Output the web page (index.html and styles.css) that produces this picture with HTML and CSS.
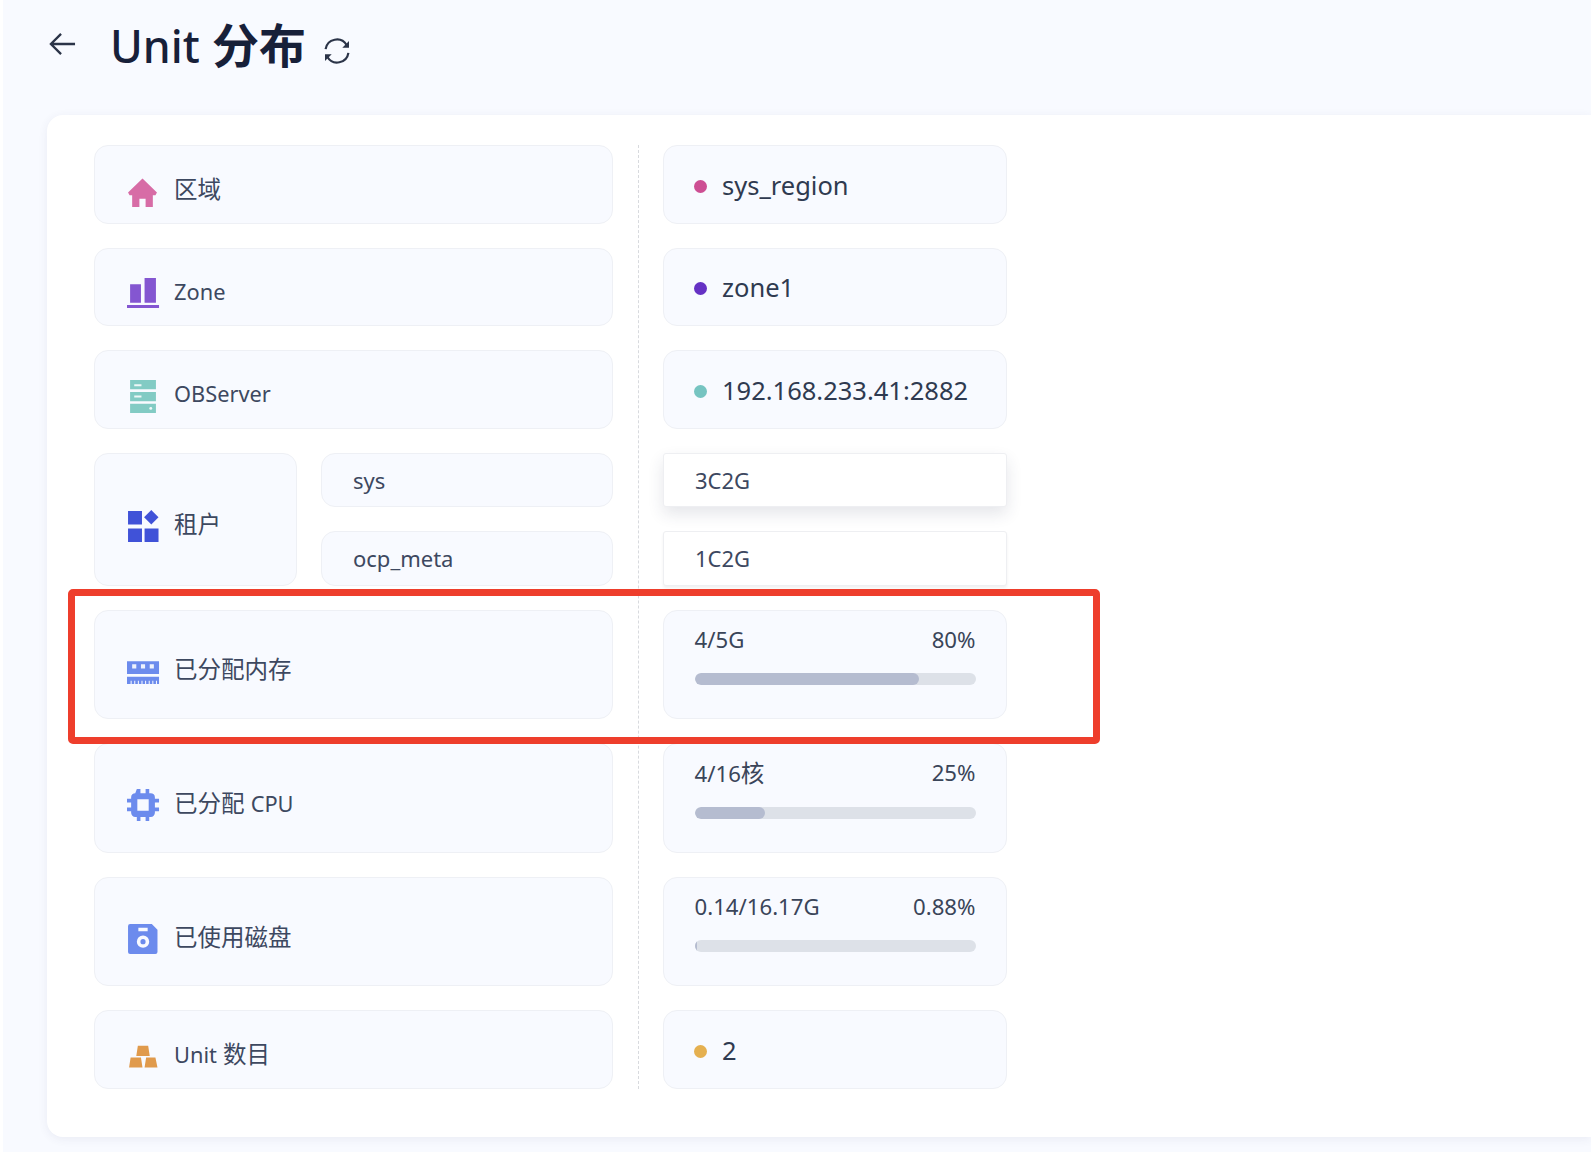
FILE: index.html
```html
<!DOCTYPE html>
<html lang="zh">
<head>
<meta charset="utf-8">
<title>Unit 分布</title>
<link rel="stylesheet" href="styles.css">
</head>
<body>
<div class="page">
  <header class="header">
    <svg class="back" viewBox="0 0 28 24" width="27" height="24"><path d="M27 12H2M12.5 1.500 2 12l10.500 10.500" fill="none" stroke="#2b3448" stroke-width="2.400"/></svg>
    <h1 class="title"><span class="title-latin">Unit</span> 分布</h1>
    <svg class="refresh" viewBox="0 0 28 28" width="28" height="28"><path d="M2.600 12.200A11.400 11.400 0 0 1 23.600 8M25.400 15.800A11.400 11.400 0 0 1 4.400 20" fill="none" stroke="#2b3448" stroke-width="2.200"/><path d="M26 4v6.700h-6.700zM2 24v-6.700h6.700z" fill="#2b3448"/></svg>
  </header>
  <main class="card">
    <div class="col col-left">
      <div class="box row-s"><svg class="icon" viewBox="0 0 30 30"><path d="M15 3.500 29 17l-1.500 2.500H25V31h-7v-8h-6v8H5V19.500H2.500L1 17z" fill="#d76ca6"/></svg><span>区域</span></div>
      <div class="box row-s"><svg class="icon" viewBox="0 0 30 30"><path d="M3 7h10.500v18H3zM17 1h11v24H17z" fill="#8456d1"/><path d="M0 27h31v3H0z" fill="#8456d1"/></svg><span class="latin">Zone</span></div>
      <div class="box row-s"><svg class="icon" viewBox="0 0 30 30"><path d="M3 0h25v9H3zM3 11.500h25v9H3zM3 23h25v9H3z" fill="#82cbc4"/><path d="M7 4h7v2H7zM7 15h7v2H7z" fill="#eef8f7"/><circle cx="23" cy="27.500" r="1.400" fill="#eef8f7"/></svg><span class="latin">OBServer</span></div>
      <div class="tenant">
        <div class="box tenant-name"><svg class="icon" viewBox="0 0 30 30"><path d="M1 1h13.500v13H1zM1 18h13.500v13H1zM17 18h13.500v13H17z" fill="#4052d8"/><path d="M23.500 0 30.500 7 23.500 14 16.500 7z" fill="#4052d8"/></svg><span>租户</span></div>
        <div class="tenant-list">
          <div class="box sub">sys</div>
          <div class="box sub">ocp_meta</div>
        </div>
      </div>
      <div class="box row-l"><svg class="icon" viewBox="0 0 30 30"><path d="M0 6h31v12.500H0z" fill="#6c8bed"/><path d="M5 9h4v4H5zM13.500 9h4v4h-4zM22 9h4v4h-4z" fill="#eef2fd"/><path d="M0 21h31v3.500H0zM0 24h31v4h-2v-3h-1v3h-2.500v-3h-1v3H22v-3h-1v3h-2.500v-3h-1v3H15v-3h-1v3h-2.500v-3h-1v3H8v-3H7v3H4.500v-3h-1v3H0z" fill="#6c8bed"/></svg><span>已分配内存</span></div>
      <div class="box row-l"><svg class="icon" viewBox="0 0 30 30"><path fill-rule="evenodd" d="M9.500 0h3.500v4h5V0h3.500v4H23a4 4 0 0 1 4 4v1.500h4V13h-4v5h4v3.500h-4V23a4 4 0 0 1-4 4h-1.500v4H18v-4h-5v4H9.500v-4H8a4 4 0 0 1-4-4v-1.500H0V18h4v-5H0V9.500h4V8a4 4 0 0 1 4-4zM10 10v11h11V10z" fill="#6c8bed"/></svg><span>已分配 <span class="latin-inner">CPU</span></span></div>
      <div class="box row-l"><svg class="icon" viewBox="0 0 30 30"><path fill-rule="evenodd" d="M3 2h21l5.500 5.500V29a2 2 0 0 1-2 2H3a2 2 0 0 1-2-2V4a2 2 0 0 1 2-2zM11 5.500V9h9V5.500zM15.500 13a6 6 0 1 0 0 12 6 6 0 0 0 0-12zM15.500 16.500a2.500 2.500 0 1 1 0 5 2.500 2.500 0 0 1 0-5z" fill="#6c8bed"/></svg><span>已使用磁盘</span></div>
      <div class="box row-s"><svg class="icon" viewBox="0 0 30 30"><path d="M10.500 5.500h10l1.500 10H9zM3.500 17h10l1.500 9.500H2zM18.500 17h9l2 9.500H17z" fill="#e09a4c"/></svg><span><span class="latin-inner">Unit</span> 数目</span></div>
    </div>
    <div class="divider"></div>
    <div class="col col-right">
      <div class="box row-s value"><i class="dot dot-pink"></i>sys_region</div>
      <div class="box row-s value"><i class="dot dot-purple"></i>zone1</div>
      <div class="box row-s value"><i class="dot dot-teal"></i>192.168.233.41:2882</div>
      <div class="tenant-list tenant-specs">
        <div class="spec spec-raised">3C2G</div>
        <div class="spec">1C2G</div>
      </div>
      <div class="box row-l usage">
        <div class="usage-text"><span>4/5G</span><span>80%</span></div>
        <div class="track"><div class="fill" style="width:80%"></div></div>
      </div>
      <div class="box row-l usage">
        <div class="usage-text"><span>4/16<span class="cjk-inner">核</span></span><span>25%</span></div>
        <div class="track"><div class="fill" style="width:25%"></div></div>
      </div>
      <div class="box row-l usage">
        <div class="usage-text"><span>0.14/16.17G</span><span>0.88%</span></div>
        <div class="track"><div class="fill" style="width:0.88%"></div></div>
      </div>
      <div class="box row-s value"><i class="dot dot-amber"></i>2</div>
    </div>
  </main>
  <div class="highlight"></div>
</div>
</body>
</html>
```
FILE: styles.css
```css
* { box-sizing: border-box; }
html, body { margin: 0; height: 100%; background: #fff; }
body {
  font-family: "Noto Sans", "Noto Sans CJK SC", sans-serif;
  color: #3d4860;
  overflow: hidden;
}
.page {
  position: relative;
  margin-left: 3px;
  width: 1588px;
  height: 1152px;
  background: #f8faff;
  overflow: hidden;
}
.header {
  height: 114.500px;
  display: flex;
  align-items: flex-start;
  padding-left: 46px;
}
.back { margin-top: 32px; flex: none; }
.title {
  margin: 10px 0 0 34px;
  font-size: 47px;
  line-height: 70px;
  font-weight: 600;
  color: #172039;
  white-space: nowrap;
}
.title-latin { font-size: 44.500px; font-weight: 500; }
.refresh { margin: 37px 0 0 17px; flex: none; }
.card {
  margin-left: 44px;
  height: 1022.500px;
  padding: 30.500px 0 0 47px;
  background: #fff;
  border-radius: 16px 0 0 16px;
  box-shadow: 0 2px 10px rgba(60, 70, 110, 0.08);
  display: flex;
  align-items: flex-start;
}
.col { display: flex; flex-direction: column; gap: 24.100px; }
.col-left { width: 519px; }
.col-right { width: 344px; }
.divider {
  align-self: flex-start;
  height: 944px;
  margin: 0 24.500px;
  width: 1px;
  border-left: 1px dashed #d8dade;
}
.box {
  background: #f8faff;
  border: 1.500px solid #eef0f5;
  border-radius: 14px;
}
.row-s, .row-l, .tenant-name {
  display: flex;
  align-items: center;
  padding-left: 32px;
  font-size: 23.500px;
}
.row-s { height: 78.500px; }
.row-l { height: 109.500px; }
.row-s > span, .row-l > span, .tenant-name > span { position: relative; top: 5px; line-height: 30px; white-space: nowrap; }
.row-s > .latin { font-size: 21.800px; }
.latin-inner { font-size: 21.800px; }
.icon { width: 31px; height: 31px; margin-right: 16px; flex: none; position: relative; top: 6px; overflow: visible; }
.tenant { display: flex; gap: 24px; height: 132.800px; }
.tenant-name { width: 203px; height: 100%; }
.tenant-list { flex: 1; display: flex; flex-direction: column; gap: 23.800px; }
.tenant-specs { flex: none; height: 132.800px; }
.sub, .spec {
  height: 54.500px;
  display: flex;
  align-items: center;
  padding-left: 31px;
  font-size: 22px;
}
.spec {
  background: #fff;
  border: 1.500px solid #eeeff2;
  border-radius: 3px;
  box-shadow: 0 2px 3px rgba(0, 0, 0, 0.06);
}
.spec-raised { box-shadow: 0 7px 16px rgba(40, 50, 80, 0.12); }
.row-s.value {
  font-size: 25.500px;
  color: #2f3a50;
  padding: 1px 0 0 30px;
  white-space: nowrap;
}
.dot {
  width: 13px;
  height: 13px;
  border-radius: 50%;
  margin: 3px 15px 0 0;
  flex: none;
}
.dot-pink { background: #cd4e93; }
.dot-purple { background: #6531c4; }
.dot-teal { background: #76c4c1; }
.dot-amber { background: #e5b050; }
.row-l.usage {
  display: block;
  padding: 13px 30.500px 0;
}
.usage-text {
  display: flex;
  justify-content: space-between;
  font-size: 22.200px;
  line-height: 32px;
  color: #3a4559;
}
.cjk-inner { font-size: 23.500px; }
.track {
  margin-top: 17px;
  height: 12px;
  border-radius: 6px;
  background: #dde1e8;
  overflow: hidden;
}
.fill { height: 100%; background: #b5bcd0; border-radius: 6px; }
.highlight {
  position: absolute;
  left: 65px;
  top: 589px;
  width: 1032px;
  height: 155px;
  border: 7px solid #ee3e2c;
  border-radius: 5px;
}
```
